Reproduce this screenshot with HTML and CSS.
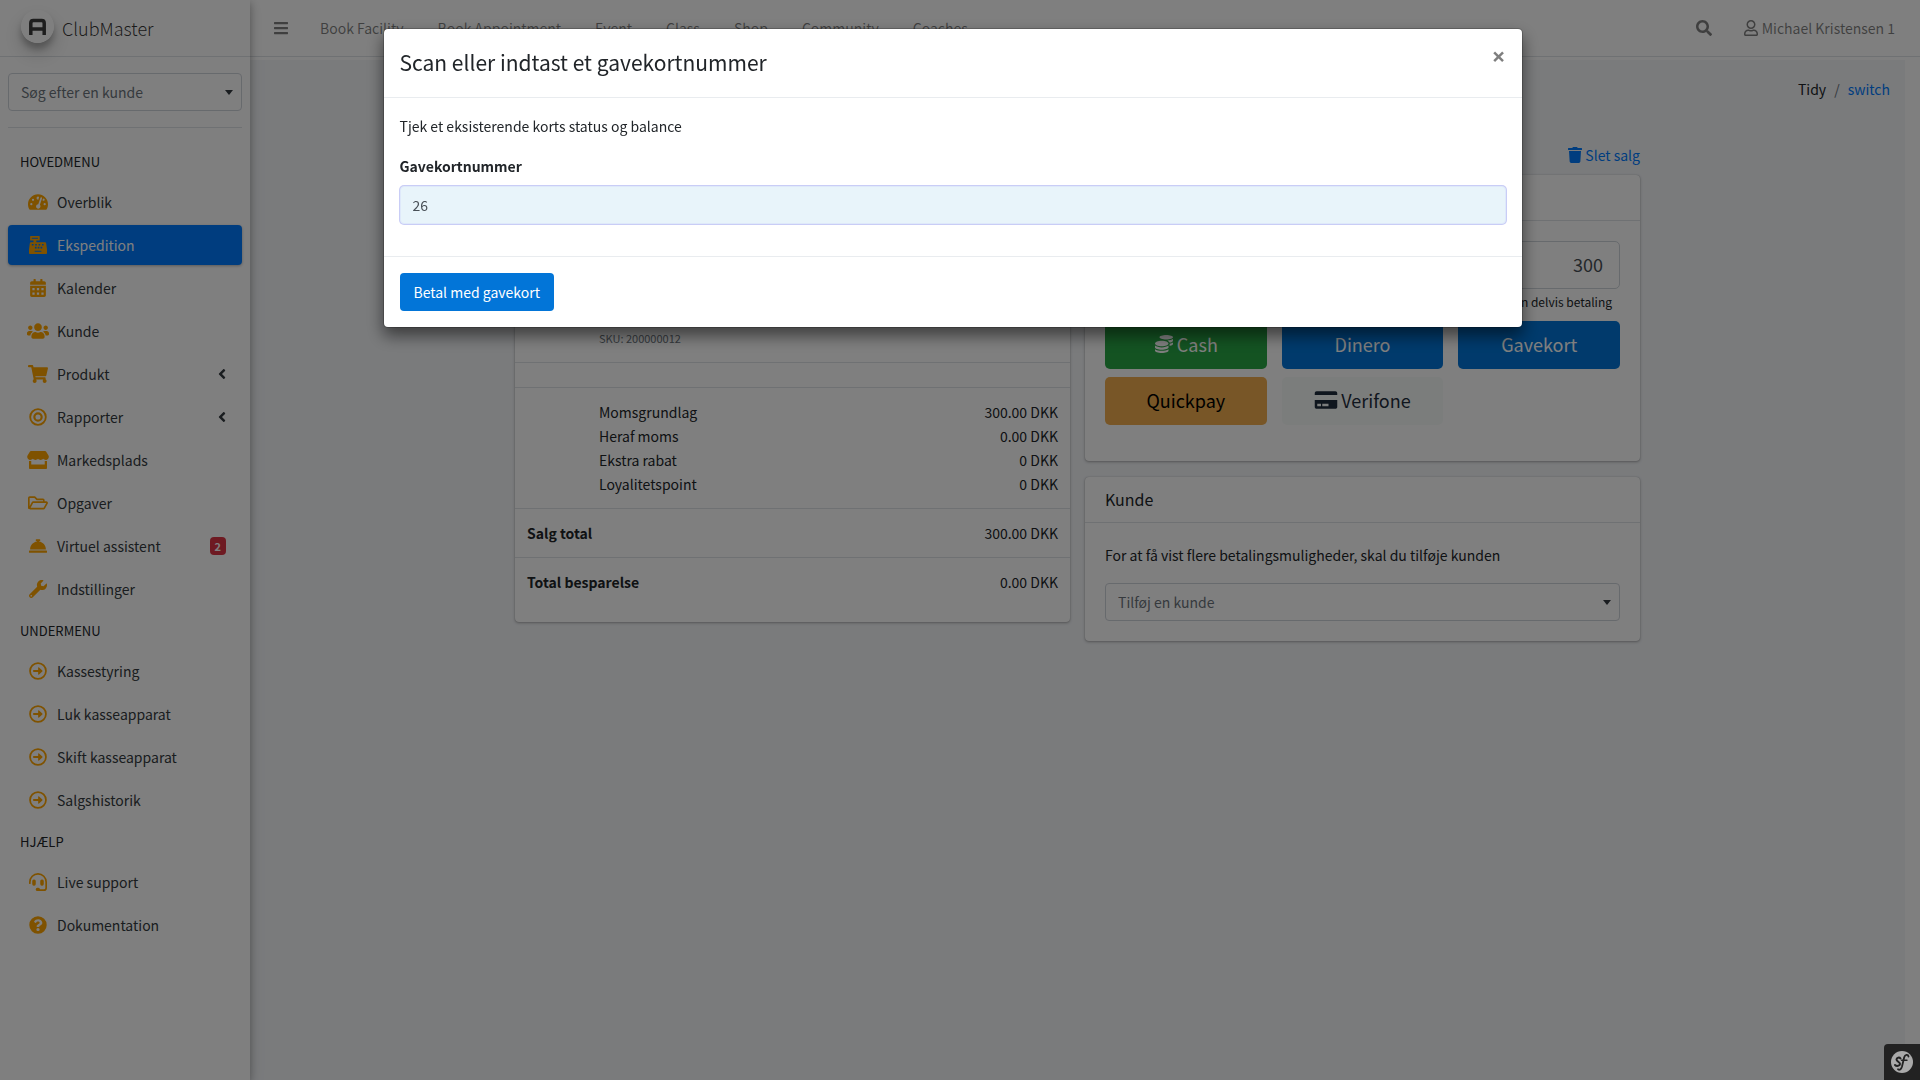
FILE: index.html
```html
<!DOCTYPE html>
<html lang="da">
<head>
<meta charset="utf-8">
<title>ClubMaster</title>
<link rel="stylesheet" href="styles.css">
</head>
<body>
<svg class="sprite" aria-hidden="true">
  <symbol id="i-bars" viewBox="0 0 448 512"><path d="M16 132h416c8.800 0 16-7.200 16-16V76c0-8.800-7.200-16-16-16H16C7.200 60 0 67.200 0 76v40c0 8.800 7.200 16 16 16zm0 160h416c8.800 0 16-7.200 16-16v-40c0-8.800-7.200-16-16-16H16c-8.800 0-16 7.200-16 16v40c0 8.800 7.200 16 16 16zm0 160h416c8.800 0 16-7.200 16-16v-40c0-8.800-7.200-16-16-16H16c-8.800 0-16 7.200-16 16v40c0 8.800 7.200 16 16 16z"/></symbol>
  <symbol id="i-search" viewBox="0 0 512 512"><path d="M505 442.700L405.300 343c-4.500-4.500-10.600-7-17-7H372c27.600-35.300 44-79.700 44-128C416 93.100 322.900 0 208 0S0 93.100 0 208s93.100 208 208 208c48.300 0 92.700-16.400 128-44v16.300c0 6.400 2.500 12.500 7 17l99.700 99.700c9.400 9.400 24.600 9.400 33.900 0l28.300-28.300c9.400-9.400 9.400-24.600.1-34zM208 336c-70.700 0-128-57.200-128-128 0-70.700 57.200-128 128-128 70.700 0 128 57.200 128 128 0 70.700-57.200 128-128 128z"/></symbol>
  <symbol id="i-user" viewBox="0 0 448 512"><path d="M313.600 304c-28.700 0-42.500 16-89.600 16-47.100 0-60.800-16-89.600-16C60.200 304 0 364.200 0 438.400V464c0 26.500 21.500 48 48 48h352c26.500 0 48-21.500 48-48v-25.600c0-74.200-60.200-134.400-134.400-134.400zM400 464H48v-25.600c0-47.600 38.800-86.400 86.400-86.400 14.600 0 38.300 16 89.600 16 51.700 0 74.900-16 89.600-16 47.600 0 86.400 38.800 86.400 86.400V464zM224 288c79.500 0 144-64.500 144-144S303.500 0 224 0 80 64.500 80 144s64.500 144 144 144zm0-240c52.900 0 96 43.100 96 96s-43.100 96-96 96-96-43.100-96-96 43.100-96 96-96z"/></symbol>
  <symbol id="i-gauge" viewBox="0 0 576 512"><path fill-rule="evenodd" d="M288 32C129 32 0 161 0 320c0 53 14 102 39 145 6 9 16 15 27 15h444c11 0 21-6 27-15 25-43 39-92 39-145C576 161 447 32 288 32zM96 352a32 32 0 1 1 0-64 32 32 0 0 1 0 64zm48-128a32 32 0 1 1 0-64 32 32 0 0 1 0 64zm144-128a32 32 0 0 1 31 26l-22 66a32 32 0 1 1-9-92zm62 320a64 64 0 1 1-54-96l61-182a24 24 0 0 1 46 15l-61 182a64 64 0 0 1 8 81zm68-219 16-37a32 32 0 1 1-16 37zm62 155a32 32 0 1 1 0-64 32 32 0 0 1 0 64z"/></symbol>
  <symbol id="i-register" viewBox="0 0 512 512"><path fill-rule="evenodd" d="M511 378 489 211c-3-20-20-35-40-35H208V128h80c9 0 16-7 16-16V16c0-9-7-16-16-16H48c-9 0-16 7-16 16v96c0 9 7 16 16 16h80v48H63c-20 0-37 15-40 35L1 378l-1 9v93c0 18 14 32 32 32h448c18 0 32-14 32-32v-93zM80 80V48h176v32zm0 192v-48h48v48zm88 80v-48h48v48zm8-80v-48h48v48zm176 176H160v-32h192zM248 352v-48h48v48zm24-80v-48h48v48zm56 80v-48h48v48zm40-80v-48h48v48z"/></symbol>
  <symbol id="i-calendar" viewBox="0 0 448 512"><path fill-rule="evenodd" d="M0 464c0 26 22 48 48 48h352c26 0 48-22 48-48V192H0zM64 256h64v64H64zm128 0h64v64h-64zm128 0h64v64h-64zM64 384h64v64H64zm128 0h64v64h-64zm128 0h64v64h-64zM400 64h-48V16c0-9-7-16-16-16h-32c-9 0-16 7-16 16v48H160V16c0-9-7-16-16-16h-32c-9 0-16 7-16 16v48H48C22 64 0 86 0 112v48h448v-48c0-26-22-48-48-48z"/></symbol>
  <symbol id="i-users" viewBox="0 0 640 512"><path d="M96 224c35.300 0 64-28.700 64-64s-28.700-64-64-64-64 28.700-64 64 28.700 64 64 64zm448 0c35.300 0 64-28.700 64-64s-28.700-64-64-64-64 28.700-64 64 28.700 64 64 64zm32 32h-64c-17.600 0-33.500 7.100-45.100 18.600 40.300 22.100 68.900 62 75.100 109.400h66c17.700 0 32-14.300 32-32v-32c0-35.300-28.700-64-64-64zm-256 0c61.900 0 112-50.100 112-112S381.900 32 320 32 208 82.100 208 144s50.100 112 112 112zm76.800 32h-8.300c-20.800 10-43.900 16-68.500 16s-47.600-6-68.500-16h-8.300C179.600 288 128 339.600 128 403.200V432c0 26.500 21.500 48 48 48h288c26.500 0 48-21.500 48-48v-28.800c0-63.600-51.600-115.200-115.200-115.200zm-223.700-13.400C161.500 263.100 145.600 256 128 256H64c-35.300 0-64 28.700-64 64v32c0 17.700 14.300 32 32 32h65.900c6.300-47.400 34.900-87.300 75.200-109.400z"/></symbol>
  <symbol id="i-cart" viewBox="0 0 576 512"><path d="M528 301l47-208c4-15-8-29-23-29H159l-9-45C148 8 138 0 127 0H24C11 0 0 11 0 24v16c0 13 11 24 24 24h70l70 343c-17 10-28 28-28 49 0 31 25 56 56 56s56-25 56-56c0-16-6-30-17-40h210c-11 10-17 24-17 40 0 31 25 56 56 56s56-25 56-56c0-22-13-41-32-50l6-25c3-15-8-29-24-29H218l-6-32h293c11 0 21-8 23-19z"/></symbol>
  <symbol id="i-target" viewBox="0 0 512 512"><g fill="none" stroke="currentColor"><circle cx="256" cy="256" r="222" stroke-width="52"/><circle cx="256" cy="256" r="104" stroke-width="62"/></g></symbol>
  <symbol id="i-store" viewBox="0 0 616 512"><path d="M602 118 537 15C531 6 520 0 509 0H107C96 0 86 6 80 15L15 118c-34 53-4 127 59 136 4 1 9 1 13 1 30 0 56-13 74-33 18 20 44 33 74 33s56-13 73-33c18 20 44 33 74 33s56-13 74-33c18 20 44 33 73 33 5 0 10 0 14-1 63-9 93-83 59-136zM529 287c-10 0-20-2-29-4v101H116V283c-9 2-19 4-29 4-6 0-12 0-18-1-5-1-11-2-17-4v198c0 18 15 32 32 32h448c18 0 32-14 32-32V282c-5 2-11 3-17 4-6 1-12 1-18 1z"/></symbol>
  <symbol id="i-folder" viewBox="0 0 576 512"><path fill="none" stroke="currentColor" stroke-width="48" stroke-linejoin="round" d="M36 416 24 400V112c0-13 11-24 24-24h146l64 64h174c13 0 24 11 24 24v56M36 418l92-172c5-9 13-14 22-14h376c18 0 29 18 20 34l-77 138c-5 9-13 14-22 14H48"/></symbol>
  <symbol id="i-bell" viewBox="0 0 512 512"><path d="M288 130.500V112h16c9 0 16-7 16-16V80c0-9-7-16-16-16h-96c-9 0-16 7-16 16v16c0 9 7 16 16 16h16v18.500C115.500 146 32 239 32 352h448c0-113-83.500-206-192-221.500zM496 384H16c-9 0-16 7-16 16v32c0 9 7 16 16 16h480c9 0 16-7 16-16v-32c0-9-7-16-16-16z"/></symbol>
  <symbol id="i-wrench" viewBox="0 0 512 512"><path d="M507.700 109.100c-2.200-9-13.500-12.100-20.100-5.500l-74.400 74.400-67.800-11.400-11.400-67.800 74.400-74.400c6.600-6.600 3.400-17.900-5.700-20.100-47.400-11.800-99.500.9-136.600 37.900-39.600 39.600-50.500 97.100-34 147.200L18.700 402.800c-25 25-25 65.500 0 90.500s65.500 25 90.500 0l213.200-213.200c50.200 16.700 107.500 5.700 147.400-34.200 37.100-37.100 49.700-89.400 37.900-136.800zM64 472a24 24 0 1 1 0-48 24 24 0 0 1 0 48z"/></symbol>
  <symbol id="i-arrow" viewBox="0 0 512 512"><circle cx="256" cy="256" r="226" fill="none" stroke="currentColor" stroke-width="50"/><path d="M130 228h130v-62c0-14 16-20 26-11l94 90c7 7 7 17 0 24l-94 89c-10 10-26 3-26-11v-62H130c-7 0-12-5-12-12v-33c0-7 5-12 12-12z"/></symbol>
  <symbol id="i-headset" viewBox="0 0 512 512"><path d="M24 288V256C24 128 128 24 256 24s232 104 232 232v168c0 35-29 64-64 64H260" fill="none" stroke="currentColor" stroke-width="48" stroke-linecap="round"/><rect x="92" y="184" width="100" height="176" rx="44"/><rect x="320" y="184" width="100" height="176" rx="44"/><rect x="192" y="416" width="120" height="96" rx="46"/></symbol>
  <symbol id="i-question" viewBox="0 0 512 512"><path fill-rule="evenodd" d="M504 256a248 248 0 1 1-496 0 248 248 0 0 1 496 0zM262.700 90c-54.500 0-89.300 23-116.600 63.800-3.500 5.200-2.300 12.400 2.700 16.200l34.700 26.300c5.200 4 12.600 3 16.700-2.100 17.800-22.700 30.100-35.800 57.300-35.800 20.400 0 45.700 13.100 45.700 33 0 14.900-12.400 22.600-32.600 33.900C247.100 238.500 216 254.900 216 296v4c0 6.600 5.400 12 12 12h56c6.600 0 12-5.400 12-12v-1.300c0-28.500 83.200-29.700 83.200-106.700 0-58-60.200-102-116.500-102zM256 338a46 46 0 1 0 0 92 46 46 0 0 0 0-92z"/></symbol>
  <symbol id="i-angle" viewBox="0 0 256 512"><path d="M31.700 239l136-136c9.400-9.400 24.600-9.400 33.900 0l22.600 22.600c9.400 9.400 9.400 24.600 0 33.900L127.900 256l96.400 96.400c9.400 9.400 9.400 24.600 0 33.900L201.700 409c-9.400 9.400-24.600 9.400-33.900 0l-136-136c-9.500-9.400-9.500-24.600-.1-34z"/></symbol>
  <symbol id="i-trash" viewBox="0 0 448 512"><path d="M432 32H312l-9-19A24 24 0 0 0 281 0H167a24 24 0 0 0-22 13l-9 19H16A16 16 0 0 0 0 48v32a16 16 0 0 0 16 16h416a16 16 0 0 0 16-16V48a16 16 0 0 0-16-16zM53 467a48 48 0 0 0 48 45h246a48 48 0 0 0 48-45l21-339H32z"/></symbol>
  <symbol id="i-coins" viewBox="0 0 512 512"><path d="M0 405.300V448c0 35.300 86 64 192 64s192-28.700 192-64v-42.700C342.700 434.400 267.200 448 192 448S41.300 434.400 0 405.300zM320 128c106 0 192-28.700 192-64S426 0 320 0 128 28.700 128 64s86 64 192 64zM0 300.400V352c0 35.300 86 64 192 64s192-28.700 192-64v-51.600c-41.300 34-116.900 51.600-192 51.600S41.300 334.400 0 300.400zm416 11c57.300-11.100 96-31.700 96-55.400v-42.700c-23.200 16.400-57.300 27.600-96 34.500v63.600zM192 160C86 160 0 195.800 0 240s86 80 192 80 192-35.800 192-80-86-80-192-80zm219.300 56.300c60-10.800 100.700-32 100.700-56.300v-42.700c-35.500 25.100-96.500 38.600-160.700 41.800 29.500 14.300 51.200 33.500 60 57.200z"/></symbol>
  <symbol id="i-card" viewBox="0 0 576 512"><path fill-rule="evenodd" d="M0 432c0 26 22 48 48 48h480c26 0 48-22 48-48V256H0zm192-80h160v64H192zm-128 0h96v64H64zM576 80v48H0V80c0-26 22-48 48-48h480c26 0 48 22 48 48z"/></symbol>
</svg>

<div class="app">
  <aside class="sidebar">
    <a class="brand" href="#">
      <svg class="brand-logo" viewBox="0 0 33 33" aria-hidden="true"><circle cx="16.500" cy="16.500" r="16.500" fill="#fff"/><path fill="none" stroke="#3c3c3c" stroke-width="3.500" d="M9.800 25V13q0-2.500 2.500-2.500h8.400q2.500 0 2.500 2.500v12M9 19h15"/></svg>
      <span class="brand-name">ClubMaster</span>
    </a>
    <div class="side-body">
      <div class="picker">
        <select class="select" aria-label="Søg efter en kunde"><option>Søg efter en kunde</option></select>
      </div>
      <nav class="side-nav">
        <h2 class="side-heading">HOVEDMENU</h2>
        <a class="side-link" href="#"><span class="side-icon"><svg class="w20"><use href="#i-gauge"/></svg></span><span>Overblik</span></a>
        <a class="side-link active" href="#"><span class="side-icon"><svg class="w18"><use href="#i-register"/></svg></span><span>Ekspedition</span></a>
        <a class="side-link" href="#"><span class="side-icon"><svg class="w16"><use href="#i-calendar"/></svg></span><span>Kalender</span></a>
        <a class="side-link" href="#"><span class="side-icon"><svg class="w22"><use href="#i-users"/></svg></span><span>Kunde</span></a>
        <a class="side-link" href="#"><span class="side-icon"><svg class="w20"><use href="#i-cart"/></svg></span><span>Produkt</span><svg class="angle"><use href="#i-angle"/></svg></a>
        <a class="side-link" href="#"><span class="side-icon"><svg class="w18"><use href="#i-target"/></svg></span><span>Rapporter</span><svg class="angle"><use href="#i-angle"/></svg></a>
        <a class="side-link" href="#"><span class="side-icon"><svg class="w22"><use href="#i-store"/></svg></span><span>Markedsplads</span></a>
        <a class="side-link" href="#"><span class="side-icon"><svg class="w20"><use href="#i-folder"/></svg></span><span>Opgaver</span></a>
        <a class="side-link" href="#"><span class="side-icon"><svg class="w18"><use href="#i-bell"/></svg></span><span>Virtuel assistent</span><span class="badge">2</span></a>
        <a class="side-link" href="#"><span class="side-icon"><svg class="w18"><use href="#i-wrench"/></svg></span><span>Indstillinger</span></a>
        <h2 class="side-heading">UNDERMENU</h2>
        <a class="side-link" href="#"><span class="side-icon"><svg class="w18"><use href="#i-arrow"/></svg></span><span>Kassestyring</span></a>
        <a class="side-link" href="#"><span class="side-icon"><svg class="w18"><use href="#i-arrow"/></svg></span><span>Luk kasseapparat</span></a>
        <a class="side-link" href="#"><span class="side-icon"><svg class="w18"><use href="#i-arrow"/></svg></span><span>Skift kasseapparat</span></a>
        <a class="side-link" href="#"><span class="side-icon"><svg class="w18"><use href="#i-arrow"/></svg></span><span>Salgshistorik</span></a>
        <h2 class="side-heading">HJÆLP</h2>
        <a class="side-link" href="#"><span class="side-icon"><svg class="w18"><use href="#i-headset"/></svg></span><span>Live support</span></a>
        <a class="side-link" href="#"><span class="side-icon"><svg class="w18"><use href="#i-question"/></svg></span><span>Dokumentation</span></a>
      </nav>
    </div>
  </aside>

  <div class="page">
    <header class="topbar">
      <button class="icon-btn" type="button" aria-label="Menu"><svg class="w14"><use href="#i-bars"/></svg></button>
      <nav class="top-nav">
        <a href="#">Book Facility</a><a href="#">Book Appointment</a><a href="#">Event</a><a href="#">Class</a><a href="#">Shop</a><a href="#">Community</a><a href="#">Coaches</a>
      </nav>
      <button class="icon-btn" type="button" aria-label="Søg"><svg class="w16"><use href="#i-search"/></svg></button>
      <a class="user" href="#"><svg class="w14"><use href="#i-user"/></svg>Michael Kristensen 1</a>
    </header>

    <main class="content">
      <nav class="crumbs"><span>Tidy</span><span class="slash">/</span><a href="#">switch</a></nav>
      <div class="container">
        <div class="actions"><a class="delete" href="#"><svg class="w14"><use href="#i-trash"/></svg>Slet salg</a></div>
        <div class="columns">
          <section class="card sale">
            <div class="card-header"></div>
            <table class="lines">
              <tbody>
                <tr class="item"><td></td><td class="sku">SKU: 200000012</td><td></td></tr>
                <tr><td></td><td></td><td></td></tr>
                <tr>
                  <td></td>
                  <td>Momsgrundlag<br>Heraf moms<br>Ekstra rabat<br>Loyalitetspoint</td>
                  <td class="num">300.00 DKK<br>0.00 DKK<br>0 DKK<br>0 DKK</td>
                </tr>
                <tr><th colspan="2" scope="row">Salg total</th><td class="num">300.00 DKK</td></tr>
                <tr><th colspan="2" scope="row">Total besparelse</th><td class="num">0.00 DKK</td></tr>
              </tbody>
            </table>
          </section>
          <div class="stack">
            <section class="card">
              <div class="card-header"></div>
              <div class="card-body pay">
                <input class="amount" type="text" value="300" aria-label="300">
                <p class="hint">en delvis betaling</p>
                <div class="methods">
                  <button class="pay-btn green" type="button"><svg class="w20"><use href="#i-coins"/></svg>Cash</button>
                  <button class="pay-btn blue" type="button">Dinero</button>
                  <button class="pay-btn blue" type="button">Gavekort</button>
                  <button class="pay-btn amber" type="button">Quickpay</button>
                  <button class="pay-btn pale" type="button"><svg class="w24"><use href="#i-card"/></svg>Verifone</button>
                </div>
              </div>
            </section>
            <section class="card">
              <div class="card-header"><h3 class="card-title">Kunde</h3></div>
              <div class="card-body">
                <label class="lead" for="customer">For at få vist flere betalingsmuligheder, skal du tilføje kunden</label>
                <select class="select" id="customer"><option>Tilføj en kunde</option></select>
              </div>
            </section>
          </div>
        </div>
      </div>
    </main>
  </div>
</div>

<button class="toolbar" type="button" aria-label="Symfony">
  <svg viewBox="0 0 24 24" aria-hidden="true"><circle cx="12" cy="12" r="11" fill="#aaa"/><g fill="none" stroke="#222" stroke-linecap="round"><path stroke-width="2" d="M10.500 8.500c-1-1.500-4-1-4 1s3.500 2.500 3.500 4.500-3.500 2.500-5 1"/><path stroke-width="1.800" d="M18.500 6.500c-.5-2.500-3.500-2-4.300.8L12 16.500c-.8 3-2.500 3.800-4 2.800"/><path stroke-width="1.400" d="M11.500 10.200h5.500"/></g></svg>
</button>

<div class="backdrop">
  <div class="modal" role="dialog" aria-labelledby="modal-title">
    <div class="modal-header">
      <h1 class="modal-title" id="modal-title">Scan eller indtast et gavekortnummer</h1>
      <button class="close" type="button" aria-label="Luk">×</button>
    </div>
    <div class="modal-body">
      <p class="modal-text">Tjek et eksisterende korts status og balance</p>
      <label class="field-label" for="card-number">Gavekortnummer</label>
      <input class="field" id="card-number" type="text" value="26">
    </div>
    <div class="modal-footer"><button class="primary" type="button">Betal med gavekort</button></div>
  </div>
</div>
</body>
</html>
```
FILE: styles.css
```css
* { box-sizing: border-box; }

body {
  margin: 0;
  font-family: "Noto Sans CJK JP", "Noto Sans", sans-serif;
  font-size: 14px;
  line-height: 24px;
  color: #212529;
  background: #fff;
}

h1, h2, h3, p { margin: 0; font-weight: 400; }
a { color: #007bff; text-decoration: none; }
button, input, select { font: inherit; }
button { cursor: pointer; }
svg { fill: currentColor; flex: none; }
.sprite { position: absolute; width: 0; height: 0; }

.w14 { width: 14px; height: 16px; }
.w16 { width: 16px; height: 18px; }
.w18 { width: 18px; height: 18px; }
.w20 { width: 20px; height: 18px; }
.w22 { width: 22px; height: 18px; }
.w24 { width: 24px; height: 20px; }

.app { display: flex; min-height: 100vh; }

/* Sidebar */
.sidebar {
  flex: none;
  width: 250px;
  z-index: 1;
  background: #fff;
  box-shadow: 0 3px 8px rgba(0, 0, 0, .3), 0 3px 16px rgba(0, 0, 0, .1);
}
.brand {
  display: flex;
  align-items: center;
  gap: 8px;
  height: 57px;
  padding: 0 21px;
  border-bottom: 1px solid #dee2e6;
  color: rgba(0, 0, 0, .8);
}
.brand-logo {
  width: 33px;
  height: 33px;
  margin-bottom: 3px;
  border-radius: 50%;
  box-shadow: 0 10px 20px rgba(0, 0, 0, .19), 0 6px 6px rgba(0, 0, 0, .23);
}
.brand-name { font-size: 18px; font-weight: 300; }
.side-body { padding: 16px 8px; }
.picker { padding-bottom: 16px; border-bottom: 1px solid #dee2e6; }

.select {
  display: block;
  width: 100%;
  height: 38px;
  padding: 0 12px;
  border: 1px solid #ced4da;
  border-radius: 4px;
  appearance: none;
  color: #6c757d;
  background: #fff url("data:image/svg+xml,%3Csvg xmlns='http://www.w3.org/2000/svg' viewBox='0 0 8 5'%3E%3Cpath fill='%23343a40' d='M0 0h8L4 5z'/%3E%3C/svg%3E") no-repeat right 8px center / 8px 5px;
}

.side-nav { display: flex; flex-direction: column; gap: 3px; padding-top: 16px; }
.side-heading { padding: 6px 12px 5px; font-size: 13px; color: #212529; }
.side-link ~ .side-heading { padding: 7px 12px 5px; }
.side-link {
  display: flex;
  align-items: center;
  height: 40px;
  padding: 0 16px;
  border-radius: 4px;
  color: #343a40;
}
.side-icon { display: flex; justify-content: center; width: 27px; margin-right: 6px; color: #ffa500; }
.side-link.active { color: #fff; background: #007bff; box-shadow: 0 1px 3px rgba(0, 0, 0, .3); }
.angle { width: 8px; height: 16px; margin-left: auto; }
.badge {
  margin-left: auto;
  padding: 0 5px;
  border-radius: 4px;
  font-size: 11px;
  font-weight: 700;
  line-height: 18px;
  color: #fff;
  background: #dc3545;
}

/* Top bar */
.page { display: flex; flex: 1; flex-direction: column; min-width: 0; }
.topbar {
  display: flex;
  align-items: center;
  height: 57px;
  padding: 0 9px 0 8px;
  border-bottom: 1px solid #dee2e6;
  color: rgba(0, 0, 0, .5);
}
.topbar a { color: inherit; }
.icon-btn { display: flex; padding: 8px 16px; border: 0; color: inherit; background: none; }
.top-nav { display: flex; flex: 1; gap: 34px; padding-left: 16px; }
.user { display: flex; align-items: center; gap: 4px; padding: 0 16px; }

/* Content */
.content { flex: 1; margin: 3px 15px 0 0; padding: 17px 15px; background: #f4f6f9; }
.crumbs { display: flex; justify-content: flex-end; gap: 8px; }
.slash { color: #6c757d; }
.container { max-width: 1125px; margin: 0 auto; }
.actions { display: flex; justify-content: flex-end; padding: 42px 0 8px; }
.delete { display: flex; align-items: center; gap: 3px; }
.columns { display: grid; grid-template-columns: 1fr 1fr; align-items: start; gap: 15px; }
.stack { display: grid; gap: 16px; }
.card { border-radius: 4px; background: #fff; box-shadow: 0 0 1px rgba(0, 0, 0, .25), 0 1px 3px rgba(0, 0, 0, .3); }
.card-header { min-height: 46px; padding: 10px 20px 11px; border-bottom: 1px solid #dee2e6; }
.card-title { font-size: 16px; }
.card-body { padding: 20px; }
.lead { display: block; margin-bottom: 16px; }

.sale { padding-bottom: 16px; }
.lines { width: 100%; border-collapse: collapse; }
.lines td, .lines th { padding: 12px; border-bottom: 1px solid #dee2e6; text-align: left; vertical-align: top; }
.lines tr:last-child > * { border-bottom: 0; }
.lines td:first-child { width: 72px; }
.lines td.num { text-align: right; }
.lines .item td { height: 141px; vertical-align: bottom; }
.lines .sku { font-size: 11px; color: #6c757d; }

.amount {
  display: block;
  width: 100%;
  height: 48px;
  padding: 0 16px 2px;
  border: 1px solid #ced4da;
  border-radius: 5px;
  font-size: 18px;
  text-align: right;
  color: #495057;
}
.hint { padding: 1px 8px 7px; font-size: 12px; text-align: right; }
.methods { display: grid; grid-template-columns: repeat(3, 1fr); gap: 8px 15px; }
.pay { padding-bottom: 36px; }
.pay-btn {
  display: flex;
  align-items: center;
  justify-content: center;
  gap: 3px;
  height: 48px;
  padding: 0 0 2px;
  border: 0;
  border-radius: 5px;
  font-size: 18px;
  color: #fff;
}
.green { background: #28a745; }
.blue { background: #0275d8; }
.amber { color: #000; background: #f0ad4e; }
.pale { color: #1f2d3d; background: #f7fbf9; }

/* Developer toolbar toggle */
.toolbar {
  position: fixed;
  right: 0;
  bottom: 0;
  display: flex;
  align-items: center;
  justify-content: center;
  width: 36px;
  height: 36px;
  padding: 0;
  border: 0;
  border-radius: 4px 0 0;
  background: #222;
  z-index: 20;
}
.toolbar svg { width: 24px; height: 24px; }

/* Modal */
.backdrop {
  position: fixed;
  inset: 0;
  z-index: 10;
  padding: 28px 15px 28px 0;
  background: rgba(0, 0, 0, .5);
}
.modal {
  max-width: 1140px;
  margin: 0 auto;
  border: 1px solid rgba(0, 0, 0, .2);
  border-radius: 5px;
  background: #fff;
  background-clip: padding-box;
  box-shadow: 0 8px 16px rgba(0, 0, 0, .5);
}
.modal-header { display: flex; justify-content: space-between; align-items: flex-start; padding: 15px 16px 17px; border-bottom: 1px solid #e9ecef; }
.modal-title { font-size: 21px; line-height: 36px; }
.close { padding: 0; border: 0; font-family: "Open Sans", sans-serif; font-size: 24px; font-weight: 700; color: #000; background: none; opacity: .5; }
.modal-body { padding: 16px 16px 32px; }
.modal-text { margin-bottom: 16px; }
.field-label { display: block; margin-bottom: 8px; font-weight: 700; }
.field {
  display: block;
  width: 100%;
  height: 38px;
  padding: 0 12px;
  border: 1px solid #dfe9fa;
  border-radius: 4px;
  outline: 0;
  color: #495057;
  background: #e8f4fa;
  box-shadow: 0 0 0 1px #c9cdf6;
}
.modal-footer { padding: 16px; border-top: 1px solid #e9ecef; }
.primary { height: 38px; padding: 0 14px; border: 0; border-radius: 4px; color: #fff; background: #0275d8; }
```
